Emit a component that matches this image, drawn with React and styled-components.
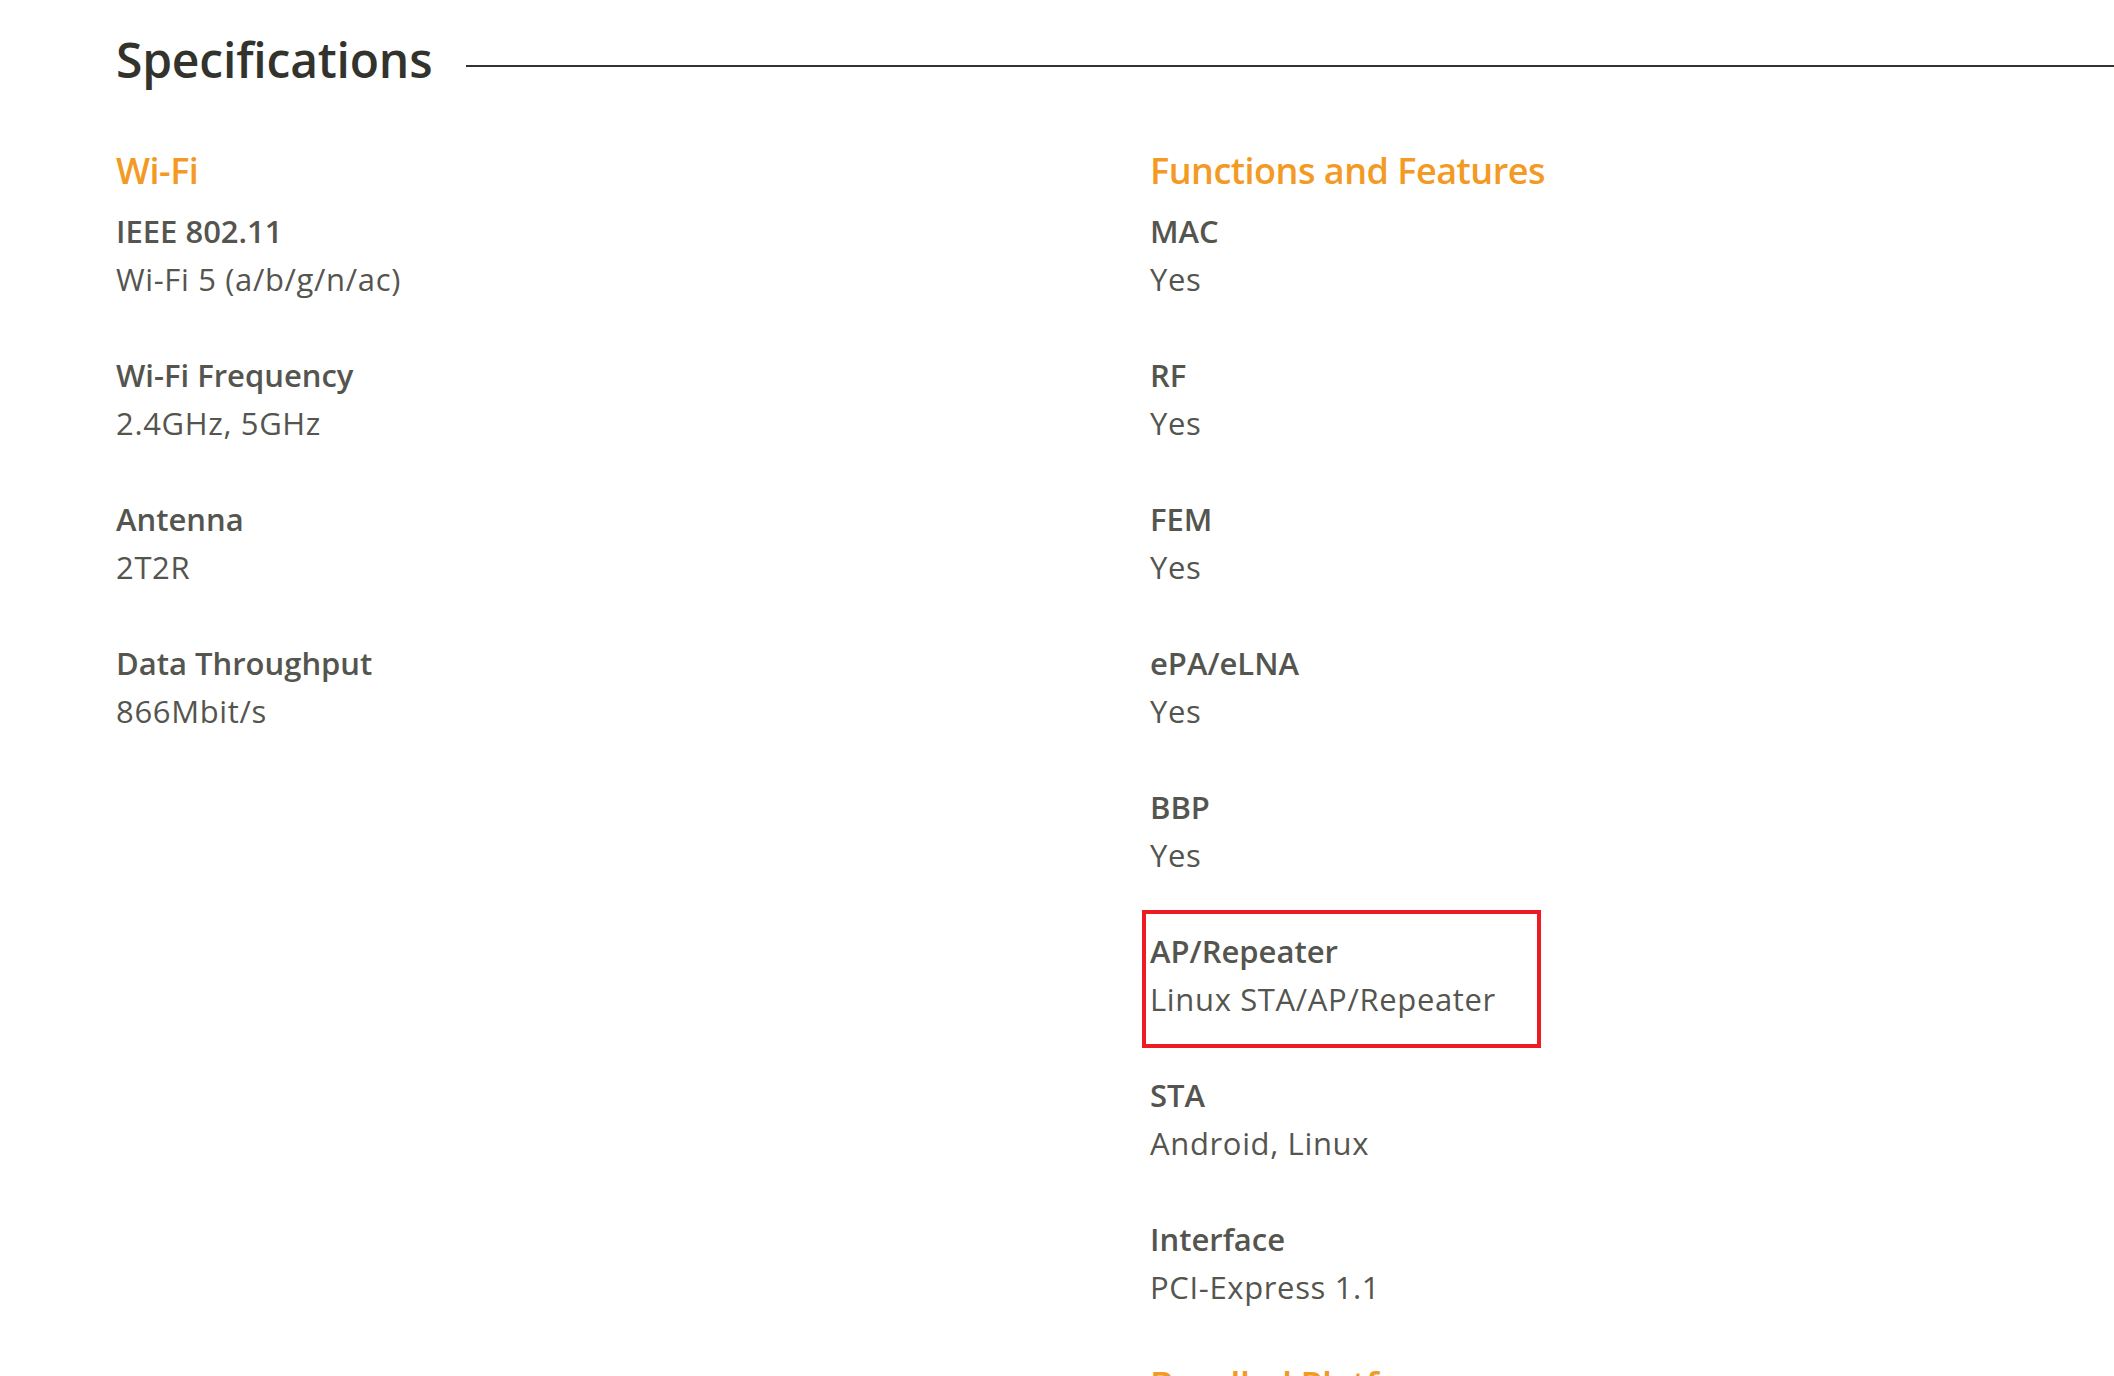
import React from "react";
import styled, { createGlobalStyle } from "styled-components";

const Global = createGlobalStyle`
  html, body { margin: 0; padding: 0; background: #ffffff; }
  body { font-family: "Open Sans", "Noto Sans", sans-serif; overflow: hidden; }
`;

const Page = styled.div`
  width: 2114px;
  height: 1376px;
  overflow: hidden;
  padding-left: 116px;
  box-sizing: border-box;
`;

const Header = styled.div`
  display: flex;
  align-items: center;
  padding-top: 31px;
`;

const Title = styled.h1`
  margin: 0;
  font-size: 48px;
  line-height: 58px;
  font-weight: 600;
  color: #33332d;
  letter-spacing: -0.2px;
  white-space: nowrap;
`;

const Rule = styled.div`
  flex: 1;
  height: 2px;
  background: #33332d;
  margin-left: 34px;
  margin-top: 11px;
`;

const Columns = styled.div`
  display: grid;
  grid-template-columns: 1034px 1fr;
  margin-top: 57.5px;
`;

const Column = styled.div`
  display: flex;
  flex-direction: column;
`;

const SectionTitle = styled.h2`
  margin: ${(p) => (p.$later ? "2px" : "0")} 0 12px;
  font-size: 36px;
  line-height: 48px;
  font-weight: 600;
  color: #f39a25;
  letter-spacing: -0.5px;
  white-space: nowrap;
`;

const Item = styled.div`
  position: relative;
  margin-bottom: 48px;
`;

const Label = styled.div`
  font-size: 31px;
  line-height: 48px;
  font-weight: 600;
  color: #55554f;
  letter-spacing: 0px;
  white-space: nowrap;
`;

const Value = styled.div`
  font-size: 31px;
  line-height: 48px;
  font-weight: 400;
  color: #55554f;
  letter-spacing: 0.65px;
  white-space: nowrap;
`;

const Highlight = styled.div`
  position: absolute;
  top: -17px;
  left: -8px;
  width: 399px;
  height: 138px;
  border: 4px solid #ed1c24;
  box-sizing: border-box;
  pointer-events: none;
`;

const wifi = [
  ["IEEE 802.11", "Wi-Fi 5 (a/b/g/n/ac)"],
  ["Wi-Fi Frequency", "2.4GHz, 5GHz"],
  ["Antenna", "2T2R"],
  ["Data Throughput", "866Mbit/s"],
];

const features = [
  ["MAC", "Yes"],
  ["RF", "Yes"],
  ["FEM", "Yes"],
  ["ePA/eLNA", "Yes"],
  ["BBP", "Yes"],
  ["AP/Repeater", "Linux STA/AP/Repeater", true],
  ["STA", "Android, Linux"],
  ["Interface", "PCI-Express 1.1"],
];

const Spec = ({ label, value, highlight }) => (
  <Item>
    <Label>{label}</Label>
    <Value>{value}</Value>
    {highlight && <Highlight />}
  </Item>
);

export default function App() {
  return (
    <Page>
      <Global />
      <Header>
        <Title>Specifications</Title>
        <Rule />
      </Header>
      <Columns>
        <Column>
          <SectionTitle>Wi-Fi</SectionTitle>
          {wifi.map(([l, v]) => (
            <Spec key={l} label={l} value={v} />
          ))}
        </Column>
        <Column>
          <SectionTitle>Functions and Features</SectionTitle>
          {features.map(([l, v, h]) => (
            <Spec key={l} label={l} value={v} highlight={h} />
          ))}
          <SectionTitle $later>Bundled Platform</SectionTitle>
        </Column>
      </Columns>
    </Page>
  );
}
